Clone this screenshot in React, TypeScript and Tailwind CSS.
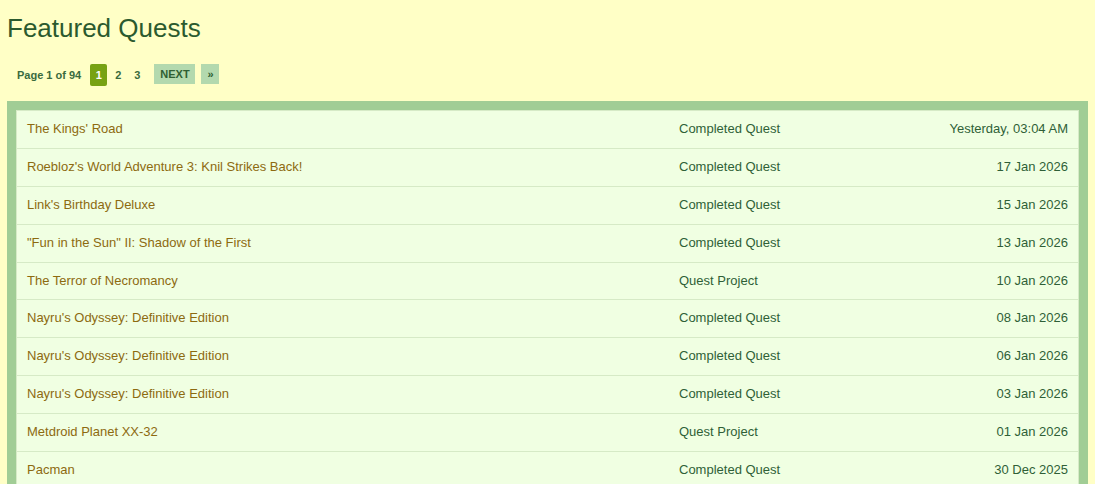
import React from "react";

const rows: [string, string, string][] = [
  ["The Kings' Road", "Completed Quest", "Yesterday, 03:04 AM"],
  ["Roebloz's World Adventure 3: Knil Strikes Back!", "Completed Quest", "17 Jan 2026"],
  ["Link's Birthday Deluxe", "Completed Quest", "15 Jan 2026"],
  ["\"Fun in the Sun\" II: Shadow of the First", "Completed Quest", "13 Jan 2026"],
  ["The Terror of Necromancy", "Quest Project", "10 Jan 2026"],
  ["Nayru's Odyssey: Definitive Edition", "Completed Quest", "08 Jan 2026"],
  ["Nayru's Odyssey: Definitive Edition", "Completed Quest", "06 Jan 2026"],
  ["Nayru's Odyssey: Definitive Edition", "Completed Quest", "03 Jan 2026"],
  ["Metdroid Planet XX-32", "Quest Project", "01 Jan 2026"],
  ["Pacman", "Completed Quest", "30 Dec 2025"],
];

export default function App() {
  return (
    <div
      className="min-h-screen bg-[#ffffc6] px-[7px] pb-4"
      style={{ fontFamily: '"Liberation Sans", Arial, sans-serif' }}
    >
      <h1 className="pt-[13px] text-[26px] leading-[30px] font-normal text-[#2b5a2e]">
        Featured Quests
      </h1>
      <div className="mt-[21px] flex items-start pl-[10px] text-[11px] font-bold text-[#3a6b3e]">
        <span className="mt-[5px] leading-[13px]">Page 1 of 94</span>
        <span className="ml-[9px] flex h-[22px] w-[17px] items-center justify-center rounded-[2px] bg-[#77a213] text-white">
          1
        </span>
        <span className="ml-[8px] mt-[5px] leading-[13px]">2</span>
        <span className="ml-[13px] mt-[5px] leading-[13px]">3</span>
        <span className="ml-[14px] flex h-[20px] w-[41px] items-center justify-center bg-[#b3d9ae] text-[#2f5f33]">
          NEXT
        </span>
        <span className="ml-[6px] flex h-[20px] w-[18px] items-center justify-center bg-[#b3d9ae] text-[#2f5f33]">
          »
        </span>
      </div>
      <div className="mt-[15px] bg-[#a1cd95] p-[9px]">
        <div className="border border-[#d6eac6] bg-[#f0ffe2] text-[13px] leading-[15px]">
          {rows.map((r, i) => (
            <div
              key={i}
              className={`flex pt-[10px] pb-[11.9px] ${i > 0 ? "border-t border-[#d6eac6]" : ""}`}
            >
              <div className="w-[651px] shrink-0 pl-[10px] text-[#8d6a10]">{r[0]}</div>
              <div className="flex-1 pl-[11px] text-[#2f5f37]">{r[1]}</div>
              <div className="w-[220px] pr-[10px] text-right text-[#2f5f37]">{r[2]}</div>
            </div>
          ))}
        </div>
      </div>
    </div>
  );
}
